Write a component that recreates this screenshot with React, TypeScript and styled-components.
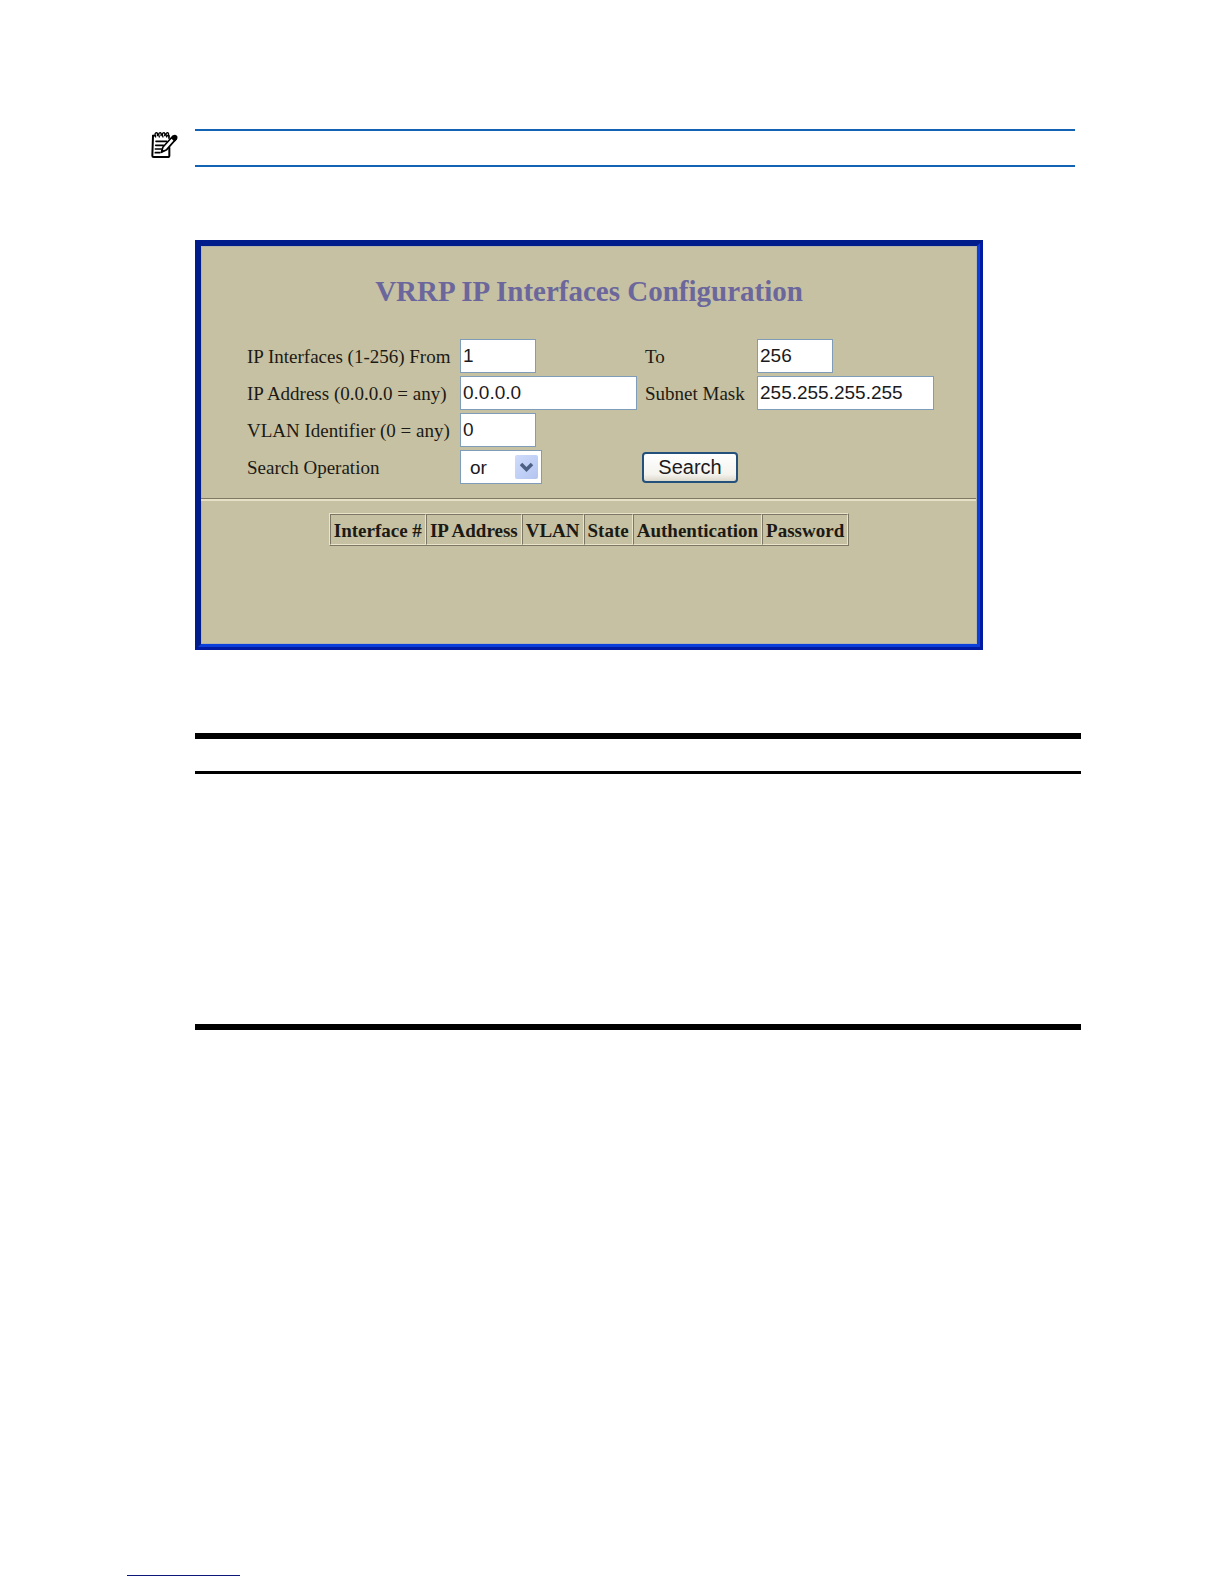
import React from "react";
import styled, { createGlobalStyle } from "styled-components";

const GlobalStyle = createGlobalStyle`
  *, *::before, *::after { box-sizing: border-box; }
  body {
    margin: 0;
    background: #fff;
    color: #1c1a14;
    font-family: "Liberation Serif", "Times New Roman", serif;
  }
`;

const Page = styled.main`
  display: flex;
  flex-direction: column;
  min-height: 100vh;
  padding: 129px 143px 8px 127px;
`;

const NoteRow = styled.aside`
  display: flex;
  align-items: flex-start;
  gap: 16px;
  margin: 0 6px 0 24px;
`;

const NoteIcon = styled.svg`
  flex: none;
  width: 28px;
  height: 30px;
`;

const NoteBody = styled.div`
  flex: 1;
  height: 38px;
  border: solid #1263b4;
  border-width: 2px 0;
`;

const Content = styled.div`
  margin: 73px 0 0 68px;
`;

const Frame = styled.section`
  max-width: 788px;
  border: 3px solid #001d8b;
  border-right-color: #001ba2;
  border-bottom-color: #001ba2;
`;

const Panel = styled.div`
  min-height: 404px;
  border: 3px solid #001d8b;
  border-right-color: #0a3fdc;
  border-bottom-color: #0a3fdc;
  background: #c6c1a3;
  box-shadow: inset 0 0 0 1px #b3b4ac;
`;

const Title = styled.h1`
  margin: 0;
  padding: 28px 0 0;
  text-align: center;
  color: #6b679c;
  font-size: 29px;
  line-height: 34px;
`;

const SearchForm = styled.form`
  display: grid;
  grid-template-columns: 213px 182px 115px 177px;
  grid-auto-rows: 34px;
  row-gap: 3px;
  align-items: center;
  padding: 31px 0 0 46px;
`;

const Label = styled.label<{ $inset?: boolean }>`
  padding: 2px 0 0 ${(p) => (p.$inset ? 3 : 0)}px;
  font-size: 19px;
  line-height: 22px;
  white-space: nowrap;
`;

const Field = styled.input<{ $wide?: boolean }>`
  width: ${(p) => (p.$wide ? 177 : 76)}px;
  height: 34px;
  padding: 0 2px 1px;
  border: 1px solid #7f9db9;
  border-radius: 0;
  background: #fff;
  color: #1c1a1c;
  font: 19px "Liberation Sans", Arial, sans-serif;
`;

const SelectBox = styled.div`
  position: relative;
  width: 82px;
  height: 34px;
`;

const Select = styled.select`
  appearance: none;
  width: 100%;
  height: 100%;
  padding: 0 28px 0 9px;
  border: 1px solid #7f9db9;
  border-radius: 0;
  background: #fff;
  color: #1c1a1c;
  font: 19px "Liberation Sans", Arial, sans-serif;
`;

const SelectArrow = styled.svg`
  position: absolute;
  top: 5px;
  right: 4px;
  width: 23px;
  height: 24px;
  border-radius: 2px;
  background: linear-gradient(135deg, #cfdcfc, #b4c4f0);
  pointer-events: none;
`;

const SearchButton = styled.button`
  width: 96px;
  height: 31px;
  padding: 0;
  border: 2px solid #24507c;
  border-radius: 4px;
  background: linear-gradient(#fff, #f4f3ee 75%, #dcd8cc);
  color: #1c1a1c;
  font: 20px "Liberation Sans", Arial, sans-serif;
`;

const Divider = styled.hr`
  height: 3px;
  margin: 14px 1px 0 0;
  border: 0;
  border-top: 1px solid #7d7964;
  background: #e6e1c6;
`;

const Results = styled.table`
  margin: 12px auto 0;
  border: 1px solid;
  border-color: #e9e4ca #7b7764 #7b7764 #e9e4ca;
  border-spacing: 0;
`;

const HeaderCell = styled.th`
  height: 31px;
  padding: 2px 3px 0;
  border: 1px solid;
  border-color: #7b7764 #e9e4ca #e9e4ca #7b7764;
  font-size: 19px;
  line-height: 22px;
  white-space: nowrap;
`;

const RuledSection = styled.section`
  height: 297px;
  margin-top: 83px;
  border: solid #000;
  border-width: 6px 0;
`;

const RuledHeader = styled.div`
  height: 35px;
  border-bottom: 3px solid #000;
`;

const FooterRule = styled.hr`
  width: 113px;
  height: 1px;
  margin: auto auto 0 0;
  border: 0;
  background: #0c1878;
`;

const columns = [
  "Interface #",
  "IP Address",
  "VLAN",
  "State",
  "Authentication",
  "Password",
];

export default function App() {
  return (
    <>
      <GlobalStyle />
      <Page>
        <NoteRow>
          <NoteIcon viewBox="0 0 84 90" aria-hidden="true">
            <g fill="none" stroke="#000" strokeLinecap="round" strokeLinejoin="round">
              <path d="M6 20 L4 80 Q4 84 8 84 H50 Q55 84 55 80 V56" strokeWidth="6" />
              <path d="M6 20 H12 M50 20 H54 V28" strokeWidth="5" />
              <path
                d="M14 24 Q9 12 17 11 Q21 12 19 20 M25 24 Q20 12 28 11 Q32 12 30 20 M36 24 Q31 12 39 11 Q43 12 41 20 M47 24 Q42 12 50 11 Q54 12 52 20"
                strokeWidth="4"
              />
              <path d="M15 37 H47 M14 49 H37 M13 60 H31 M13 71 H26" strokeWidth="5" />
            </g>
            <path d="M66 21 L76 29 L47 62 L31 70 L36 54 Z" fill="#fff" stroke="#000" strokeWidth="5" strokeLinejoin="round" />
            <path d="M60 28 L68 18 Q75 15 79 22 Q81 27 77 32 L71 38 Z M28 73 L33 60 L41 67 Z" fill="#000" />
          </NoteIcon>
          <NoteBody />
        </NoteRow>

        <Content>
          <Frame>
            <Panel>
              <Title>VRRP IP Interfaces Configuration</Title>
              <SearchForm onSubmit={(event) => event.preventDefault()}>
                <Label htmlFor="from">IP Interfaces (1-256) From</Label>
                <Field id="from" defaultValue="1" />
                <Label htmlFor="to" $inset>To</Label>
                <Field id="to" defaultValue="256" />

                <Label htmlFor="address">IP Address (0.0.0.0 = any)</Label>
                <Field id="address" defaultValue="0.0.0.0" $wide />
                <Label htmlFor="mask" $inset>Subnet Mask</Label>
                <Field id="mask" defaultValue="255.255.255.255" $wide />

                <Label htmlFor="vlan">VLAN Identifier (0 = any)</Label>
                <Field id="vlan" defaultValue="0" />
                <span />
                <span />

                <Label htmlFor="operation">Search Operation</Label>
                <SelectBox>
                  <Select id="operation" defaultValue="or">
                    <option>or</option>
                    <option>and</option>
                  </Select>
                  <SelectArrow viewBox="0 0 23 24" aria-hidden="true">
                    <path d="M6 9 L11.5 14.5 L17 9" fill="none" stroke="#4d6185" strokeWidth="3.5" />
                  </SelectArrow>
                </SelectBox>
                <SearchButton type="submit">Search</SearchButton>
              </SearchForm>
              <Divider />
              <Results>
                <thead>
                  <tr>
                    {columns.map((name) => (
                      <HeaderCell key={name} scope="col">{name}</HeaderCell>
                    ))}
                  </tr>
                </thead>
              </Results>
            </Panel>
          </Frame>

          <RuledSection>
            <RuledHeader />
          </RuledSection>
        </Content>

        <FooterRule />
      </Page>
    </>
  );
}
